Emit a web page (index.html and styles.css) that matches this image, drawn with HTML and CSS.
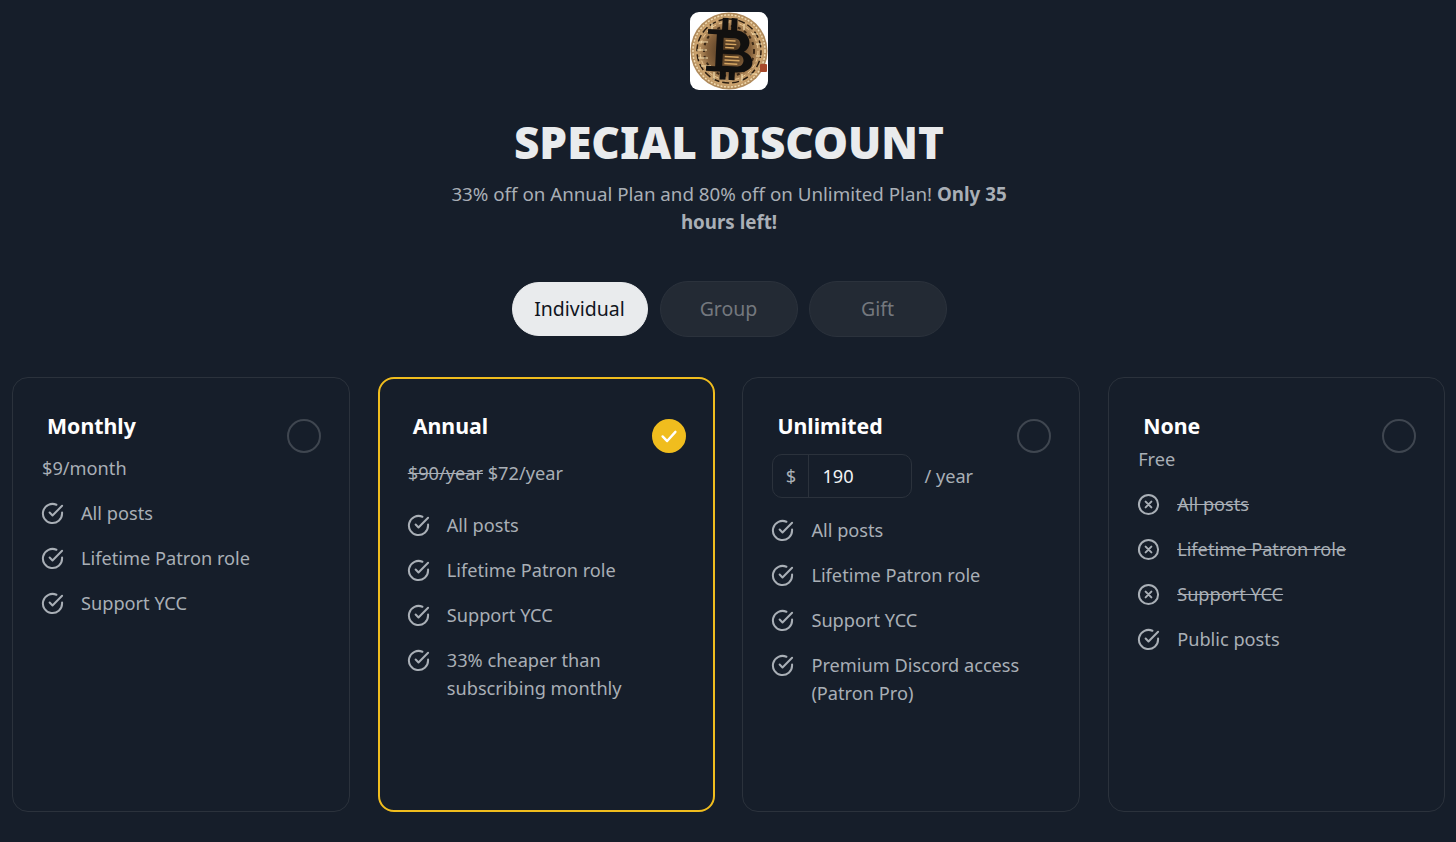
FILE: index.html
```html
<!DOCTYPE html>
<html lang="en">
<head>
<meta charset="utf-8">
<title>Special Discount</title>
<link rel="stylesheet" href="styles.css">
</head>
<body>
<svg class="defs" width="0" height="0" aria-hidden="true">
  <symbol id="ok" viewBox="0 0 24 24"><path d="M22 11.08V12a10 10 0 1 1-5.93-9.14"/><path d="M22 4 12 14.01l-3-3"/></symbol>
  <symbol id="no" viewBox="0 0 24 24"><circle cx="12" cy="12" r="10"/><path d="m15 9-6 6M9 9l6 6"/></symbol>
</svg>
<main class="page">
  <div class="logo">
    <svg viewBox="0 0 78 78" width="78" height="78">
      <defs>
        <radialGradient id="coin" cx="50%" cy="50%" r="52%">
          <stop offset="0" stop-color="#3a2816"/><stop offset=".55" stop-color="#86623c"/><stop offset=".82" stop-color="#cfa670"/><stop offset="1" stop-color="#a07c50"/>
        </radialGradient>
      </defs>
      <circle cx="39" cy="39" r="38.500" fill="url(#coin)"/>
      <circle cx="39" cy="39" r="36" fill="none" stroke="#f0dab0" stroke-width="1.500" stroke-dasharray="2 1.500"/>
      <circle cx="39" cy="39" r="32" fill="none" stroke="#2b1d10" stroke-width="1.500" stroke-dasharray="7 3"/>
      <circle cx="39" cy="39" r="29" fill="none" stroke="#ecc994" stroke-width="1" stroke-dasharray="4 3"/>
      <circle cx="39" cy="39" r="25" fill="none" stroke="#3a2715" stroke-width="2" stroke-dasharray="3 4"/>
      <path d="M9 30h9M7 38h10M8 46h10M11 54h10M62 22h6M66 32h6M66 44h6M60 62h6M22 11v7M54 12v6M24 60v8M52 62v7" stroke="#f5dfb0" stroke-width="1.200" fill="none"/>
      <rect x="70" y="52" width="7" height="8" rx="1" fill="#a8492a"/>
      <g transform="rotate(3 39 39)">
        <g fill="#11100f">
          <rect x="31" y="6" width="6" height="14"/><rect x="40" y="6" width="6" height="14"/>
          <rect x="31" y="56" width="6" height="12"/><rect x="40" y="56" width="6" height="12"/>
        </g>
        <path fill="#11100f" fill-rule="evenodd" d="M17 18h27c10 0 15 6 15 12 0 4-2 7-5 9 6 2 9 6 9 11 0 5-5 10-16 10H17v-5h9V23h-9zm16 8v12h11c4 0 6-3 6-6s-2-6-6-6zm0 16v12h15c4 0 6-3 6-6s-2-6-6-6z"/>
        <path fill="#d6a662" d="M35 28h10v1.500H35zm0 3.500h11V33H35zm0 3.500h9v1.500h-9zm0 9h14v1.500H35zm0 3.500h15v1.500H35zm0 3.500h13v1.500H35z"/>
      </g>
    </svg>
  </div>
  <h1 class="title">SPECIAL DISCOUNT</h1>
  <p class="lead">33% off on Annual Plan and 80% off on Unlimited Plan! <strong>Only 35</strong> <strong>hours left!</strong></p>
  <div class="tabs">
    <div class="tab tab-active">Individual</div>
    <div class="tab">Group</div>
    <div class="tab">Gift</div>
  </div>
  <section class="plans">
    <article class="card">
      <span class="radio"></span>
      <h2 class="name">Monthly</h2>
      <div class="price">$9/month</div>
      <ul class="list">
        <li class="item"><svg class="ico"><use href="#ok"/></svg>All posts</li>
        <li class="item"><svg class="ico"><use href="#ok"/></svg>Lifetime Patron role</li>
        <li class="item"><svg class="ico"><use href="#ok"/></svg>Support YCC</li>
      </ul>
    </article>
    <article class="card card-selected">
      <span class="radio radio-on"><svg viewBox="0 0 24 24" width="22" height="22"><path d="m5 12.500 5 5 9-10"/></svg></span>
      <h2 class="name">Annual</h2>
      <div class="price price-annual"><s>$90/year</s> $72/year</div>
      <ul class="list">
        <li class="item"><svg class="ico"><use href="#ok"/></svg>All posts</li>
        <li class="item"><svg class="ico"><use href="#ok"/></svg>Lifetime Patron role</li>
        <li class="item"><svg class="ico"><use href="#ok"/></svg>Support YCC</li>
        <li class="item"><svg class="ico"><use href="#ok"/></svg><span>33% cheaper than<br>subscribing monthly</span></li>
      </ul>
    </article>
    <article class="card">
      <span class="radio"></span>
      <h2 class="name">Unlimited</h2>
      <div class="amount">
        <div class="field"><span class="unit">$</span><span class="value">190</span></div>
        <span>/ year</span>
      </div>
      <ul class="list">
        <li class="item"><svg class="ico"><use href="#ok"/></svg>All posts</li>
        <li class="item"><svg class="ico"><use href="#ok"/></svg>Lifetime Patron role</li>
        <li class="item"><svg class="ico"><use href="#ok"/></svg>Support YCC</li>
        <li class="item"><svg class="ico"><use href="#ok"/></svg><span>Premium Discord access<br>(Patron Pro)</span></li>
      </ul>
    </article>
    <article class="card">
      <span class="radio"></span>
      <h2 class="name">None</h2>
      <div class="price price-free">Free</div>
      <ul class="list">
        <li class="item"><svg class="ico"><use href="#no"/></svg><s>All posts</s></li>
        <li class="item"><svg class="ico"><use href="#no"/></svg><s>Lifetime Patron role</s></li>
        <li class="item"><svg class="ico"><use href="#no"/></svg><s>Support YCC</s></li>
        <li class="item"><svg class="ico"><use href="#ok"/></svg>Public posts</li>
      </ul>
    </article>
  </section>
</main>
</body>
</html>
```
FILE: styles.css
```css
* { box-sizing: border-box; }
html, body { margin: 0; height: 100%; }
body {
  background: #161e2a;
  color: #a9afb6;
  font-family: "Noto Sans", "Open Sans", sans-serif;
  font-size: 18.2px;
  line-height: 28px;
  overflow: hidden;
}
.defs { position: absolute; }
.page {
  display: flex;
  flex-direction: column;
  align-items: center;
  padding: 12px 10px 0 12px;
}
.logo {
  width: 78px;
  height: 78px;
  background: #fff;
  border-radius: 9px;
  overflow: hidden;
}
.logo svg { display: block; }
.title {
  margin: 25px 0 0;
  color: #e9ebed;
  font-size: 44px;
  line-height: 54px;
  font-weight: 900;
}
.lead {
  width: 570px;
  margin: 11px 0 0;
  font-size: 18.75px;
  text-align: center;
}
.lead strong { font-weight: 700; }
.tabs {
  display: flex;
  align-items: center;
  gap: 11px;
  margin-top: 45px;
}
.tab {
  width: 138px;
  height: 56px;
  display: flex;
  align-items: center;
  justify-content: center;
  border-radius: 28px;
  background: #232a34;
  border: 1px solid #2b323c;
  color: #74787e;
  font-size: 19.5px;
}
.tab-active {
  width: 136px;
  height: 54px;
  margin-right: 1px;
  background: #e9ebed;
  border-color: #e9ebed;
  color: #10151e;
}
.plans {
  align-self: flex-start;
  display: grid;
  grid-template-columns: 338px 336.9px 338px 337px;
  gap: 27.75px;
  margin-top: 40px;
}
.card {
  position: relative;
  height: 435px;
  padding: 33.500px 29px 0;
  border: 1px solid #2b323c;
  border-radius: 16px;
}
.card-selected {
  border: 2px solid #f0bd1e;
  padding: 32.500px 28px 0;
}
.radio {
  position: absolute;
  top: 41px;
  right: 28px;
  width: 34px;
  height: 34px;
  border: 2px solid #3f4650;
  border-radius: 50%;
}
.radio-on {
  top: 40px;
  right: 27px;
  background: #f0bd1e;
  border-color: #f0bd1e;
  display: flex;
  align-items: center;
  justify-content: center;
}
.radio-on path {
  fill: none;
  stroke: #fff;
  stroke-width: 2.6;
  stroke-linecap: round;
  stroke-linejoin: round;
}
.name {
  margin: 0;
  padding-left: 5px;
  color: #fff;
  font-size: 21.3px;
  line-height: 28px;
  font-weight: 700;
}
.price { margin-top: 14px; }
.price-annual { margin-top: 19px; }
.price-free { margin-top: 5px; }
.list {
  list-style: none;
  margin: 17px 0 0;
  padding: 0;
  display: flex;
  flex-direction: column;
  gap: 17px;
}
.price-annual + .list { margin-top: 24px; }
.item {
  display: flex;
  align-items: flex-start;
  gap: 17px;
}
.ico {
  flex: none;
  width: 23px;
  height: 23px;
  margin: 3px 0 0 -1px;
  fill: none;
  stroke: #a9afb6;
  stroke-width: 2.1;
  stroke-linecap: round;
  stroke-linejoin: round;
}
.amount {
  display: flex;
  align-items: center;
  gap: 12px;
  margin-top: 14px;
}
.amount + .list { margin-top: 18px; }
.field {
  display: flex;
  width: 140px;
  height: 44px;
  border: 1px solid #2b323c;
  border-radius: 10px;
}
.unit {
  width: 36px;
  display: flex;
  align-items: center;
  justify-content: center;
  border-right: 1px solid #2b323c;
}
.value {
  display: flex;
  align-items: center;
  padding-left: 13px;
  color: #f2f3f4;
}
```
